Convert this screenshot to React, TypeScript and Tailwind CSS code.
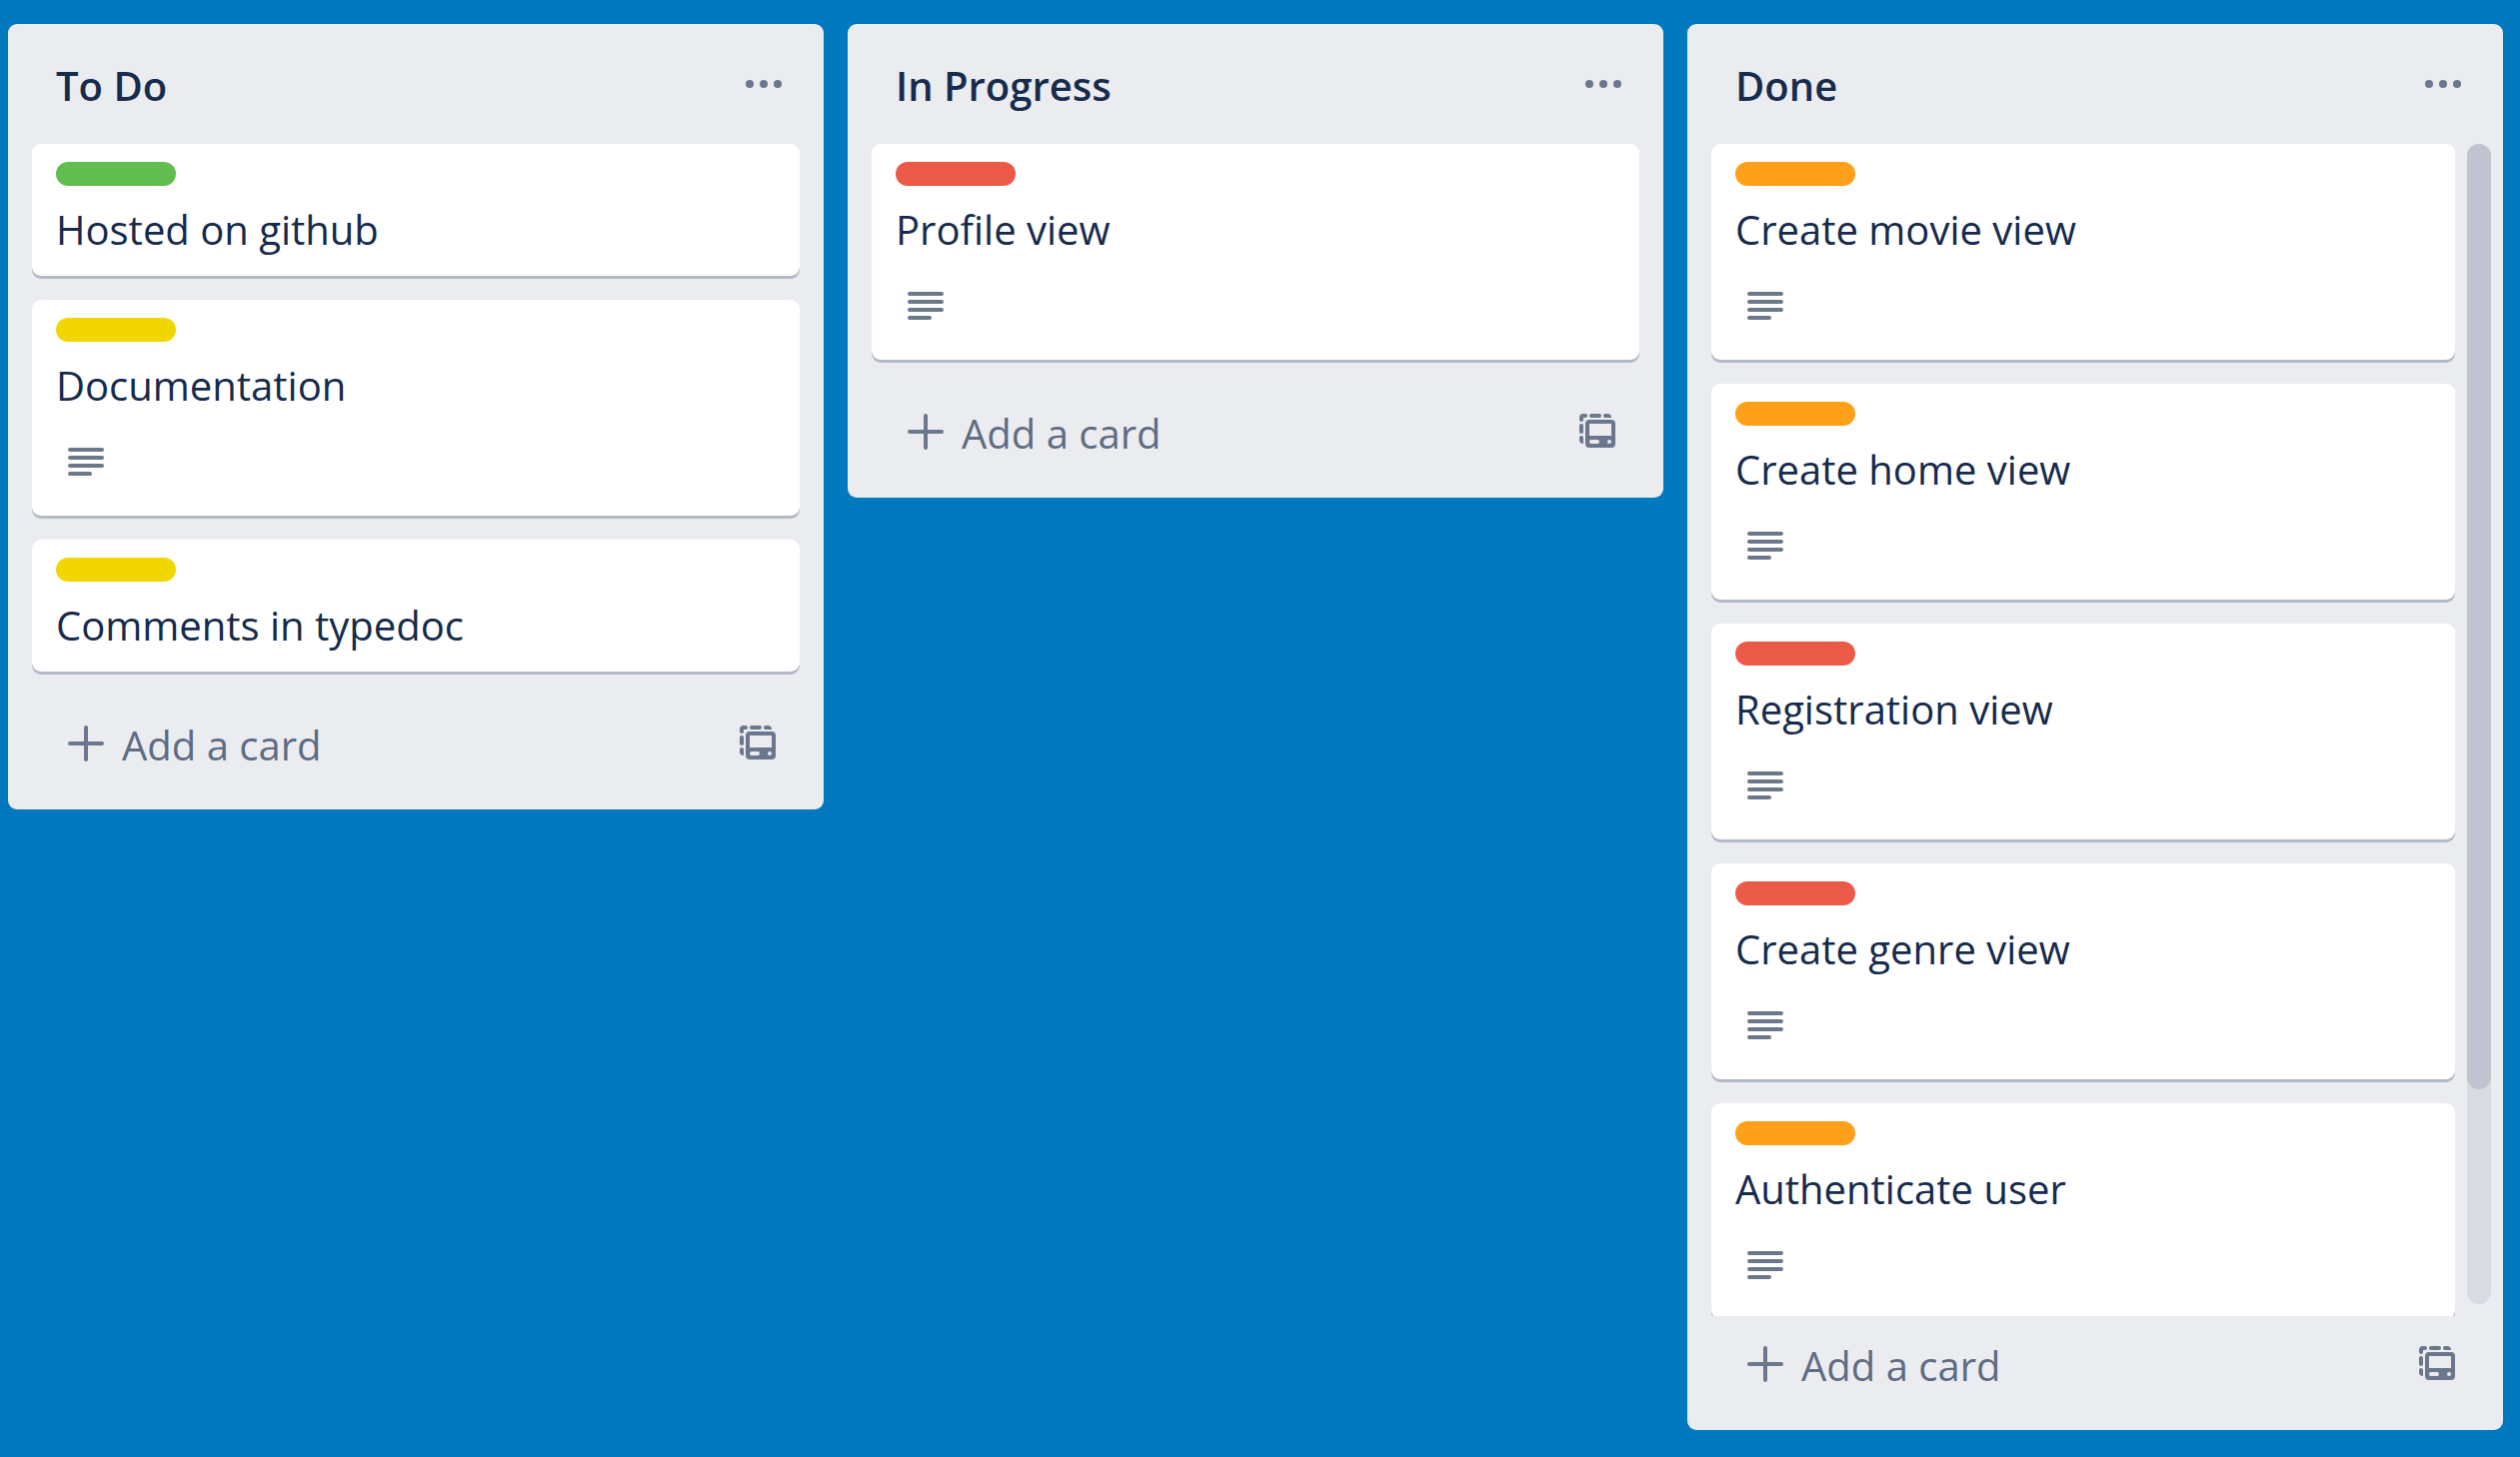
type Label = 'green' | 'yellow' | 'red' | 'orange';
type CardData = { title: string; label: Label; description?: boolean };
type ListData = { name: string; cards: CardData[]; scrolls?: boolean };

const labelColors: Record<Label, string> = {
  green: 'bg-[#61bd4f]',
  yellow: 'bg-[#f2d600]',
  red: 'bg-[#eb5a46]',
  orange: 'bg-[#ff9f1a]',
};

const lists: ListData[] = [
  {
    name: 'To Do',
    cards: [
      { title: 'Hosted on github', label: 'green' },
      { title: 'Documentation', label: 'yellow', description: true },
      { title: 'Comments in typedoc', label: 'yellow' },
    ],
  },
  {
    name: 'In Progress',
    cards: [{ title: 'Profile view', label: 'red', description: true }],
  },
  {
    name: 'Done',
    scrolls: true,
    cards: [
      { title: 'Create movie view', label: 'orange', description: true },
      { title: 'Create home view', label: 'orange', description: true },
      { title: 'Registration view', label: 'red', description: true },
      { title: 'Create genre view', label: 'red', description: true },
      { title: 'Authenticate user', label: 'orange', description: true },
    ],
  },
];

function DotsIcon() {
  return (
    <svg viewBox="0 0 48 48" className="size-12" fill="currentColor" aria-hidden="true">
      <circle cx="10" cy="24" r="4" />
      <circle cx="24" cy="24" r="4" />
      <circle cx="38" cy="24" r="4" />
    </svg>
  );
}

function DescriptionIcon() {
  return (
    <svg viewBox="0 0 48 48" className="size-12" fill="currentColor" role="img" aria-label="This card has a description">
      <rect x="6" y="10" width="36" height="4" rx="2" />
      <rect x="6" y="18" width="36" height="4" rx="2" />
      <rect x="6" y="26" width="36" height="4" rx="2" />
      <rect x="6" y="34" width="24" height="4" rx="2" />
    </svg>
  );
}

function PlusIcon() {
  return (
    <svg viewBox="0 0 48 48" className="size-12" fill="none" stroke="currentColor" strokeWidth="4" strokeLinecap="round" aria-hidden="true">
      <path d="M24 8v32M8 24h32" />
    </svg>
  );
}

function TemplateIcon() {
  return (
    <svg viewBox="0 0 48 48" className="size-12" fill="currentColor" aria-hidden="true">
      <path d="M10 6h2a2 2 0 0 1 0 4h-2v2a2 2 0 0 1-4 0v-2a4 4 0 0 1 4-4Z" />
      <rect x="16" y="6" width="12" height="4" rx="2" />
      <path d="M32 6h2a4 4 0 0 1 4 4h-6a2 2 0 0 1 0-4Z" />
      <rect x="6" y="16" width="4" height="10" rx="2" />
      <path d="M6 30a2 2 0 0 1 4 0v6a4 4 0 0 1-4-4Z" />
      <path
        fillRule="evenodd"
        d="M16 12h22a4 4 0 0 1 4 4v20a4 4 0 0 1-4 4H16a4 4 0 0 1-4-4V16a4 4 0 0 1 4-4Zm0 4v12h22V16Zm2 16a2 2 0 0 0 0 4h6a2 2 0 0 0 0-4Zm18 0a2 2 0 1 0 0 4a2 2 0 0 0 0-4Z"
      />
    </svg>
  );
}

function Card({ title, label, description }: CardData) {
  return (
    <li className="mb-6 rounded-[9px] bg-white px-6 pt-[18px] pb-4 shadow-[0_3px_0_#b3b9c5]">
      <div className={`h-6 w-[120px] rounded-full ${labelColors[label]}`} />
      <h3 className="mt-[14px] text-[40px] leading-[60px] text-[#172b4d]">{title}</h3>
      {description && (
        <div className="mt-[22px] mb-[14px] px-[6px] text-[#6b778c]">
          <DescriptionIcon />
        </div>
      )}
    </li>
  );
}

function List({ name, cards, scrolls }: ListData) {
  return (
    <section className="flex max-h-full min-h-0 flex-col rounded-[9px] bg-[#eaecf0]">
      <header className="flex items-center justify-between pt-8 pr-9 pb-7 pl-12">
        <h2 className="text-[40px] leading-[60px] font-semibold text-[#172b4d]">{name}</h2>
        <button type="button" aria-label={`${name} list actions`} className="pb-1 text-[#6b778c]">
          <DotsIcon />
        </button>
      </header>
      <div className={scrolls ? 'flex min-h-0 flex-1 gap-3 pr-3 pl-6' : 'flex px-6'}>
        <ul className={scrolls ? 'min-w-0 flex-1 overflow-y-auto [scrollbar-width:none]' : 'min-w-0 flex-1'}>
          {cards.map((card) => (
            <Card key={card.title} {...card} />
          ))}
        </ul>
        {scrolls && (
          <div className="mb-3 w-6 rounded-full bg-[#dadbe2]">
            <div className="h-22/27 rounded-full bg-[#bfc4ce]" />
          </div>
        )}
      </div>
      <footer className="flex items-center justify-between pt-5 pr-[42px] pb-[34px] pl-[54px]">
        <button type="button" className="flex items-center gap-3 text-[40px] leading-[60px] text-[#5e6c84]">
          <span className="pb-1 text-[#6b778c]">
            <PlusIcon />
          </span>
          Add a card
        </button>
        <button type="button" aria-label="Create from template" className="pb-1 text-[#6b778c]">
          <TemplateIcon />
        </button>
      </footer>
    </section>
  );
}

export default function App() {
  return (
    <main className="grid h-screen grid-cols-3 grid-rows-[minmax(0,1fr)] items-start gap-6 bg-[#0079bf] pt-6 pr-[17px] pb-[27px] pl-2 font-['Open_Sans','Noto_Sans',sans-serif]">
      {lists.map((list) => (
        <List key={list.name} {...list} />
      ))}
    </main>
  );
}
